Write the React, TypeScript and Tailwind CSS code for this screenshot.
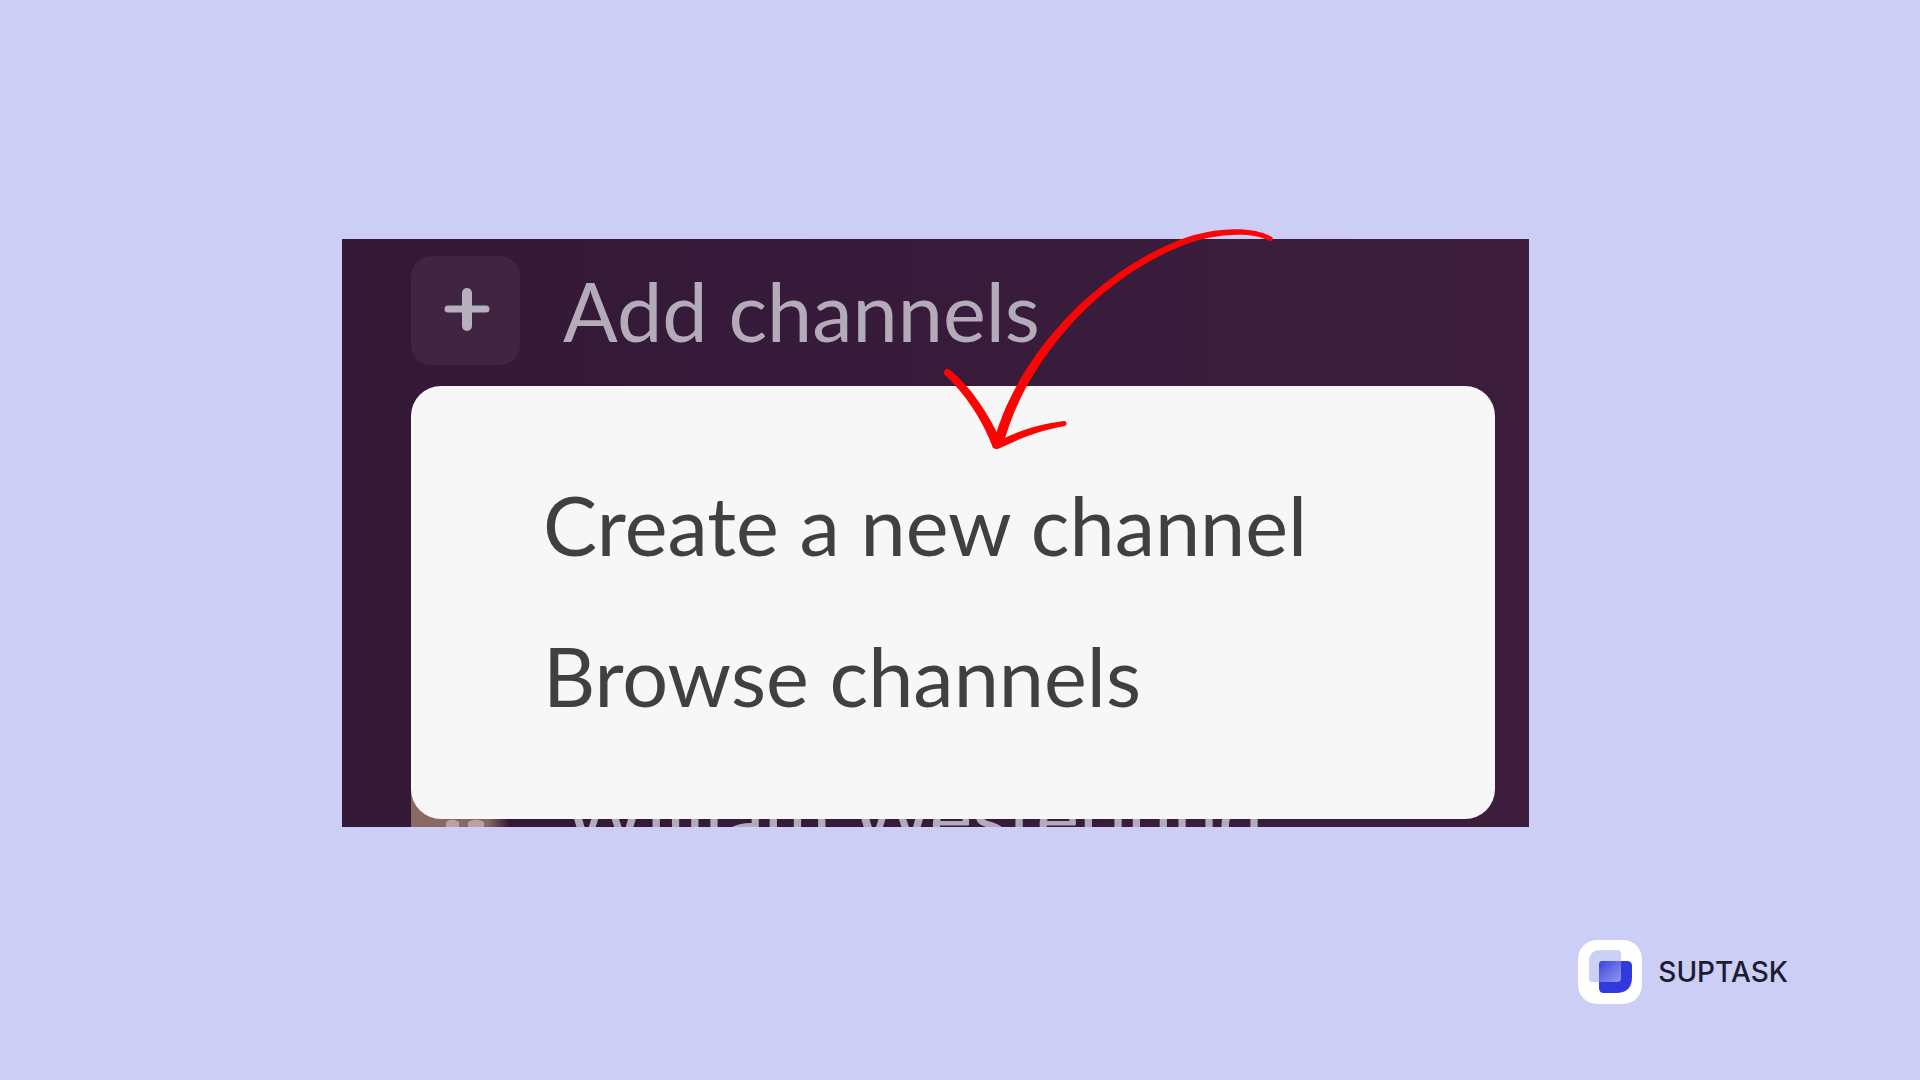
const rowText = "font-['Lato',sans-serif] text-[81px] leading-[101px] whitespace-nowrap";

const menuItems = ["Create a new channel", "Browse channels"];

function Arrow() {
  return (
    <svg
      viewBox="0 0 332 224"
      className="pointer-events-none absolute -top-[10px] left-[602px] z-20 h-[224px] w-[332px] overflow-visible"
      fill="#fb0404"
      aria-hidden="true"
    >
      <path d="M49 216C69 134 146 45 238 10C264 0 306 -5 328 8A2.3 2.3 0 0 1 326 12C304 1 266 6 240 16C150 51 79 137 59 217Z" />
      <path d="M6 141C27 158 44 184 57 212L58 217Q55 222 49 219C38 189 20 164 1 146A3.5 3.5 0 0 1 6 141Z" />
      <path d="M55 212C74 202 95 195 120 192A2.6 2.6 0 0 1 121 197C97 201 77 209 56 219Z" />
    </svg>
  );
}

function PlusIcon() {
  return (
    <svg viewBox="0 0 48 48" className="size-12" fill="none" stroke="#b6b0bc" strokeLinecap="round" aria-hidden="true">
      <path d="M25 6v33" strokeWidth="10" />
      <path d="M6 22h38" strokeWidth="7" />
    </svg>
  );
}

function Avatar() {
  return (
    <svg viewBox="0 0 109 109" className="size-[109px] shrink-0" aria-hidden="true">
      <defs>
        <linearGradient id="avatar-edge" x1="0" y1="0" x2="1" y2="0">
          <stop offset="0.7" stopColor="#8a6864" />
          <stop offset="0.9" stopColor="#8a6864" stopOpacity="0" />
        </linearGradient>
      </defs>
      <path d="M0 0H109V109H0Z" fill="url(#avatar-edge)" />
      <path d="M35 83q6 -5 13 0v5H35zM57 83q8 -5 16 0v5H57z" fill="#b9a29f" />
    </svg>
  );
}

function SuptaskLogo() {
  return (
    <svg viewBox="0 0 64 64" className="size-16" aria-hidden="true">
      <defs>
        <linearGradient id="overlap" x1="0" y1="0" x2="1" y2="1">
          <stop offset="0.1" stopColor="#444dde" />
          <stop offset="1" stopColor="#9498ee" />
        </linearGradient>
      </defs>
      <rect width="64" height="64" rx="19" fill="#fff" />
      <path d="M23 10H39Q43 10 43 14V38Q43 42 39 42H14Q11 42 11 39V22Q11 10 23 10Z" fill="#cccff6" />
      <path d="M25 21H49Q54 21 54 26V37Q54 53 38 53H26Q21 53 21 48V25Q21 21 25 21Z" fill="#2f39de" />
      <path d="M25 21H43V38Q43 42 39 42H21V25Q21 21 25 21Z" fill="url(#overlap)" />
    </svg>
  );
}

export default function App() {
  return (
    <main className="flex min-h-screen flex-col bg-[#cccef5] pt-[239px] pb-[76px]">
      <section className="relative mr-[391px] ml-[342px] bg-linear-to-r from-[#331936] via-[#381b3b] to-[#3c1d3c]">
        <div className="px-[69px] pt-[17px] pr-[34px]">
          <button type="button" className="mb-[21px] flex items-center gap-[43px] text-[#b3abb9]">
            <span className="flex size-[109px] items-center justify-center rounded-[20px] bg-[#402442]">
              <PlusIcon />
            </span>
            <span className={rowText}>Add channels</span>
          </button>

          <ul className="relative z-10 rounded-[30px] bg-[#f7f7f7] pt-[63px] pb-[68px]">
            {menuItems.map((item) => (
              <li key={item}>
                <button type="button" className={`${rowText} w-full py-[25px] pl-[132px] text-left text-[#404040]`}>
                  {item}
                </button>
              </li>
            ))}
          </ul>

          <div className="-mt-20 flex h-[88px] items-start gap-[43px] overflow-hidden text-[#b3abb9]">
            <Avatar />
            <span className={`${rowText} pt-[25px]`}>William Westerlund</span>
          </div>
        </div>
        <Arrow />
      </section>

      <footer className="mt-auto mr-[132px] flex items-center justify-end gap-4">
        <SuptaskLogo />
        <span className="font-['Inter',sans-serif] text-[28px] leading-8 font-medium text-[#1c1d33]">SUPTASK</span>
      </footer>
    </main>
  );
}
